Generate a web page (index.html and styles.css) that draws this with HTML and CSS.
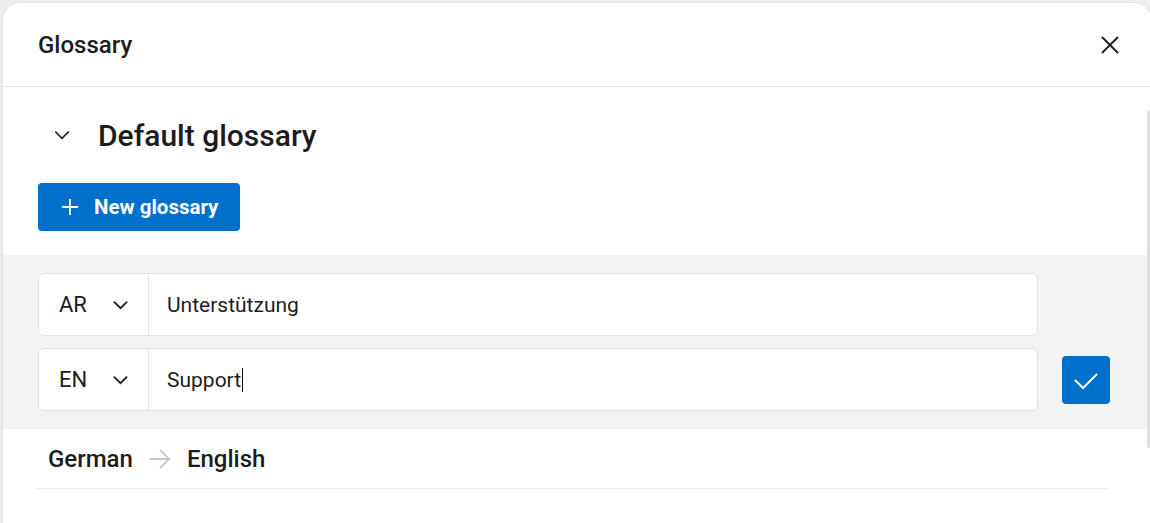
FILE: index.html
```html
<!DOCTYPE html>
<html lang="en">
<head>
<meta charset="utf-8">
<title>Glossary</title>
<link rel="stylesheet" href="styles.css">
</head>
<body>
<div class="modal">
  <header class="modal-header">
    <h2 class="modal-title">Glossary</h2>
    <button class="close-btn" aria-label="Close">
      <svg width="24" height="24" viewBox="0 0 24 24"><path d="M4 4 L20 20 M20 4 L4 20" stroke="#222" stroke-width="2" fill="none"/></svg>
    </button>
  </header>
  <div class="modal-body">
    <div class="title-row">
      <span class="title-chevron">
        <svg width="24" height="24" viewBox="0 0 24 24"><path d="M4 8 L12 16 L20 8" stroke="#222" stroke-width="2" fill="none"/></svg>
      </span>
      <h1 class="glossary-name">Default glossary</h1>
    </div>
    <div class="actions">
      <button class="primary-btn">
        <svg width="20" height="20" viewBox="0 0 20 20"><path d="M10 1 V19 M1 10 H19" stroke="#fff" stroke-width="2" fill="none"/></svg>
        <span>New glossary</span>
      </button>
    </div>
    <div class="editor">
      <div class="entry-row">
        <div class="entry">
          <div class="lang-select">
            <span>AR</span>
            <svg width="18" height="18" viewBox="0 0 18 18"><path d="M2 6 L9 13 L16 6" stroke="#222" stroke-width="2" fill="none"/></svg>
          </div>
          <div class="entry-text">Unterstützung</div>
        </div>
        <div class="spacer"></div>
      </div>
      <div class="entry-row">
        <div class="entry">
          <div class="lang-select">
            <span>EN</span>
            <svg width="18" height="18" viewBox="0 0 18 18"><path d="M2 6 L9 13 L16 6" stroke="#222" stroke-width="2" fill="none"/></svg>
          </div>
          <div class="entry-text">Support<span class="caret"></span></div>
        </div>
        <button class="confirm-btn" aria-label="Save">
          <svg width="26" height="26" viewBox="0 0 26 26"><path d="M2 13 L10 21 L24 7" stroke="#fff" stroke-width="2" fill="none"/></svg>
        </button>
      </div>
    </div>
    <div class="pair-row">
      <span class="pair-lang">German</span>
      <svg class="pair-arrow" width="24" height="24" viewBox="0 0 24 24"><path d="M1 12 H22 M12 2 L22 12 L12 22" stroke="#c9c9c9" stroke-width="2" fill="none"/></svg>
      <span class="pair-lang">English</span>
    </div>
  </div>
  <div class="scroll-thumb"></div>
</div>
</body>
</html>
```

FILE: styles.css
```css
* { box-sizing: border-box; }
html, body { margin: 0; padding: 0; }
body {
  background: #ededed;
  font-family: Roboto, "Liberation Sans", Arial, sans-serif;
  color: #1b1b1b;
  width: 1150px;
  height: 523px;
  overflow: hidden;
  padding: 2px 0 0 2px;
}
.modal {
  position: relative;
  width: 1150px;
  height: 540px;
  background: #fff;
  border: 1px solid #e2e2e2;
  border-radius: 18px;
  overflow: hidden;
}
.modal-header {
  height: 84px;
  border-bottom: 1px solid #e4e4e4;
  display: flex;
  align-items: center;
  justify-content: space-between;
  padding: 0 29px 0 35px;
}
.modal-title {
  margin: 0;
  font-size: 24px;
  font-weight: 500;
  color: #1c1c1c;
}
.close-btn {
  border: 0;
  background: none;
  padding: 0;
  width: 24px;
  height: 24px;
  display: flex;
}
.modal-body {
  padding-top: 24px;
}
.title-row {
  display: flex;
  align-items: center;
  height: 48px;
  padding-left: 35px;
  gap: 12px;
}
.title-chevron {
  width: 48px;
  height: 48px;
  display: flex;
  align-items: center;
  justify-content: center;
}
.title-chevron svg { width: 20px; height: 20px; }
.glossary-name {
  margin: 0;
  font-size: 30px;
  font-weight: 500;
  color: #1c1c1c;
}
.actions {
  padding: 24px 0 24px 35px;
}
.primary-btn {
  height: 48px;
  width: 202px;
  border: 0;
  border-radius: 4px;
  background: #0070cc;
  color: #fff;
  font-family: inherit;
  font-size: 20.5px;
  font-weight: 700;
  display: flex;
  align-items: center;
  padding: 0 0 0 23px;
  gap: 15px;
}
.primary-btn svg { width: 18px; height: 18px; }
.editor {
  background: #f3f3f3;
  padding: 18px 41px 18px 35px;
  display: flex;
  flex-direction: column;
  gap: 12px;
}
.entry-row {
  display: flex;
  align-items: center;
  gap: 24px;
}
.entry {
  flex: 1;
  height: 63px;
  background: #fff;
  border: 1px solid #e2e2e2;
  border-radius: 6px;
  display: flex;
}
.lang-select {
  width: 110px;
  border-right: 1px solid #e2e2e2;
  display: flex;
  align-items: center;
  padding-left: 20px;
  gap: 25px;
  font-size: 22px;
  color: #1c1c1c;
}
.lang-select svg { width: 17px; height: 17px; }
.entry-text {
  display: flex;
  align-items: center;
  padding-left: 18px;
  font-size: 21px;
  color: #1c1c1c;
}
.caret {
  display: inline-block;
  width: 1px;
  height: 24px;
  background: #111;
  margin-left: 1px;
}
.spacer, .confirm-btn { width: 48px; height: 48px; flex: none; }
.confirm-btn {
  border: 0;
  border-radius: 4px;
  background: #0070cc;
  display: flex;
  align-items: center;
  justify-content: center;
  padding: 0;
}
.pair-row {
  margin: 0 43px 0 33px;
  height: 60px;
  border-bottom: 1px solid #ececec;
  display: flex;
  align-items: center;
  padding-left: 12px;
  gap: 16px;
}
.pair-lang {
  font-size: 24px;
  font-weight: 500;
  color: #1c1c1c;
}
.pair-arrow { width: 22px; height: 22px; }
.scroll-thumb {
  position: absolute;
  right: 0;
  top: 107px;
  width: 4px;
  height: 338px;
  background: #dbe1e4;
  border-radius: 2px;
}
```
